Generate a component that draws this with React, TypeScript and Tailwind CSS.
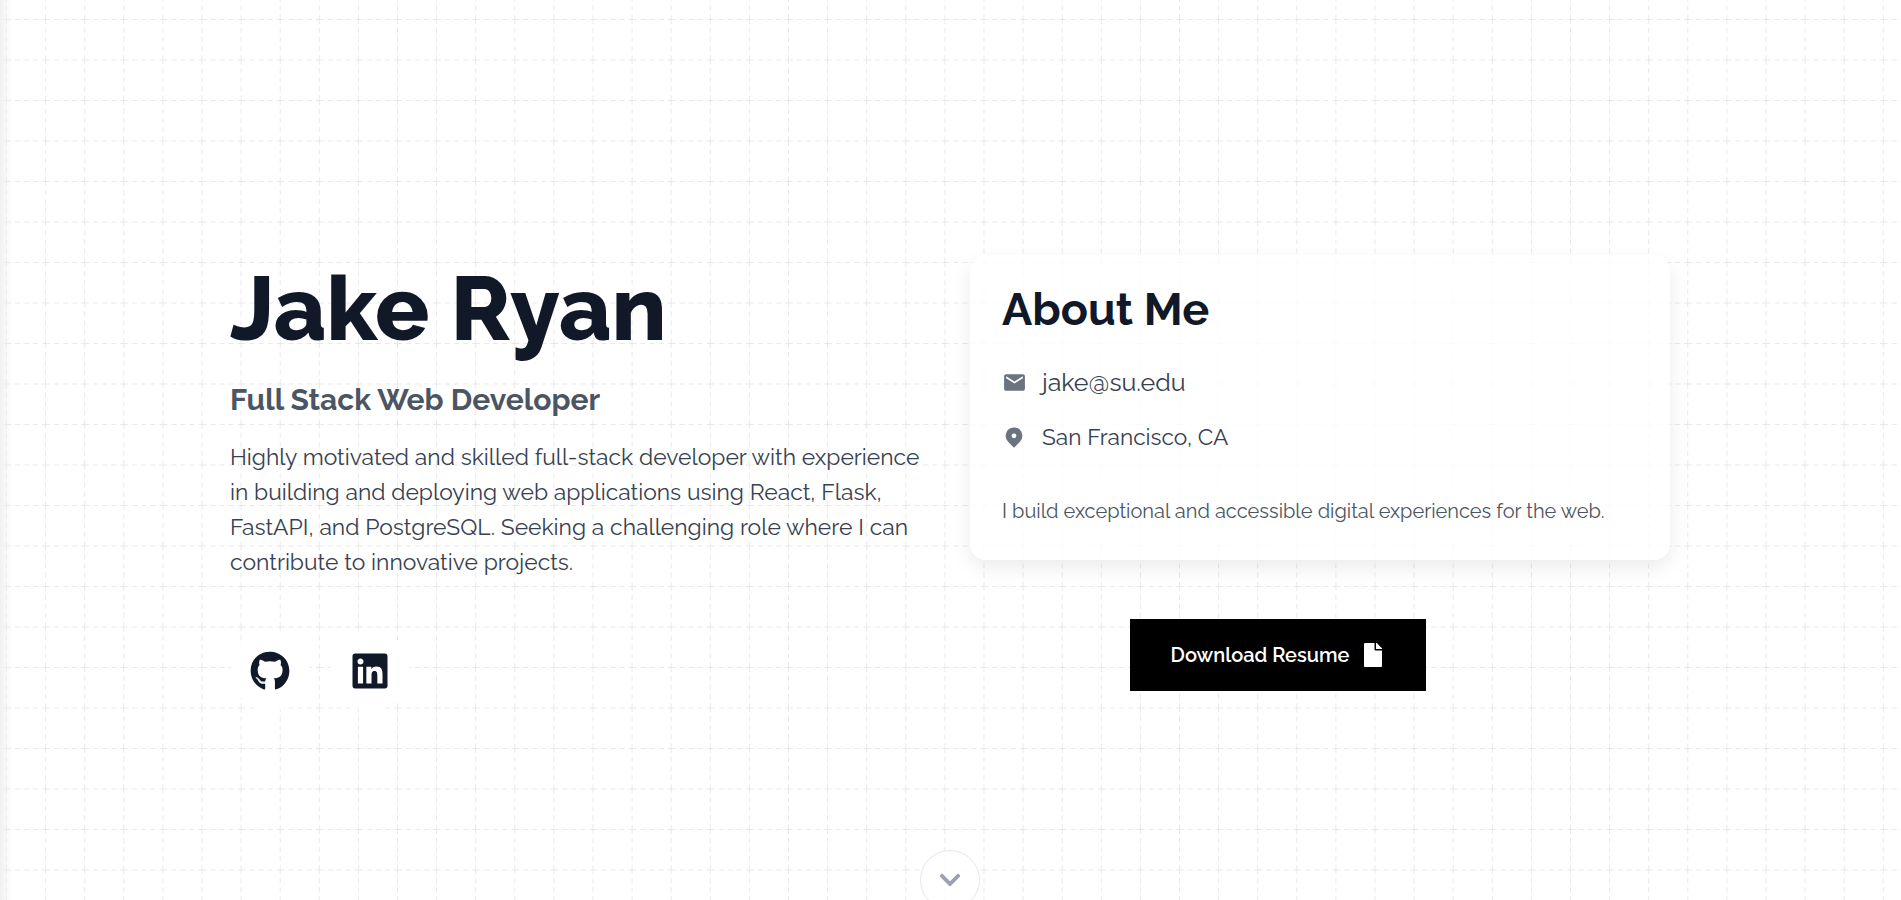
import React from 'react';
import { FaChevronDown, FaFile, FaGithub, FaLinkedin } from 'react-icons/fa';
import { HiLocationMarker } from 'react-icons/hi';
import { MdEmail } from 'react-icons/md';

const font = "font-['Raleway','Lato','Noto_Sans',sans-serif]";

const GridBackdrop = () => (
  <svg className="absolute inset-0 h-full w-full" aria-hidden="true">
    <defs>
      <pattern id="grid" x="6" y="19" width="39.1" height="40.5" patternUnits="userSpaceOnUse">
        <path d="M0 0H39.1" stroke="#e2e2e2" strokeWidth="1.5" strokeDasharray="5 4" fill="none" />
        <path d="M0 0V40.5" stroke="#e2e2e2" strokeWidth="1.5" strokeDasharray="5 4" fill="none" />
      </pattern>
    </defs>
    <rect width="100%" height="100%" fill="url(#grid)" />
  </svg>
);

export default function App() {
  return (
    <div className={`relative h-[900px] overflow-hidden bg-white ${font}`}>
      <GridBackdrop />
      <div className="absolute inset-y-0 left-0 w-3 bg-gradient-to-r from-[#f1f1f1] to-transparent" />

      <main className="relative flex items-start px-[230px] pt-[255px]">
        <section className="w-[720px] shrink-0">
          <h1 className="text-[90px] leading-[106px] font-extrabold text-[#111827]">Jake Ryan</h1>
          <h2 className="mt-[21px] text-[30px] leading-[36px] font-bold text-[#4b5563]">Full Stack Web Developer</h2>
          <p className="mt-[22px] w-[700px] text-[22.85px] leading-[35px] text-[#374151]">
            Highly motivated and skilled full-stack developer with experience in building and deploying web
            applications using React, Flask, FastAPI, and PostgreSQL. Seeking a challenging role where I can
            contribute to innovative projects.
          </p>
          <div className="mt-[51px] flex gap-[20px]">
            <a className="flex h-[80px] w-[80px] items-center justify-center rounded-full bg-white/90 text-[#111827]"><FaGithub size={40} /></a>
            <a className="flex h-[80px] w-[80px] items-center justify-center rounded-full bg-white/90 text-[#111827]"><FaLinkedin size={40} /></a>
          </div>
        </section>

        <section className="ml-[20px] flex w-[700px] shrink-0 flex-col">
          <div className="h-[305px] rounded-2xl bg-white/80 px-8 pt-8 shadow-[0_8px_20px_rgba(0,0,0,0.08)]">
            <h2 className="mt-[3px] text-[45px] leading-[40px] font-bold text-[#111827]">About Me</h2>
            <div className="mt-[36px] flex items-center gap-[15px] text-[25px] leading-[32px] text-[#374151]">
              <MdEmail size={25} className="text-[#6b7280]" />
              <span>jake@su.edu</span>
            </div>
            <div className="mt-[23px] flex items-center gap-4 text-[22.7px] leading-[32px] text-[#374151]">
              <HiLocationMarker size={24} className="text-[#6b7280]" />
              <span>San Francisco, CA</span>
            </div>
            <p className="mt-[44px] text-[20px] leading-[28px] text-[#4b5563]">
              I build exceptional and accessible digital experiences for the web.
            </p>
          </div>
          <button className="mt-[59px] ml-[160px] flex h-[72px] w-[296px] items-center justify-center gap-[12px] bg-black text-[20px] font-semibold text-white">
            Download Resume
            <FaFile size={24} />
          </button>
        </section>
      </main>

      <div className="absolute bottom-[-10px] left-[920px] flex h-[60px] w-[60px] items-center justify-center rounded-full border border-[#e5e7eb] bg-white/80">
        <FaChevronDown size={24} className="text-[#9ca3af]" />
      </div>
    </div>
  );
}
